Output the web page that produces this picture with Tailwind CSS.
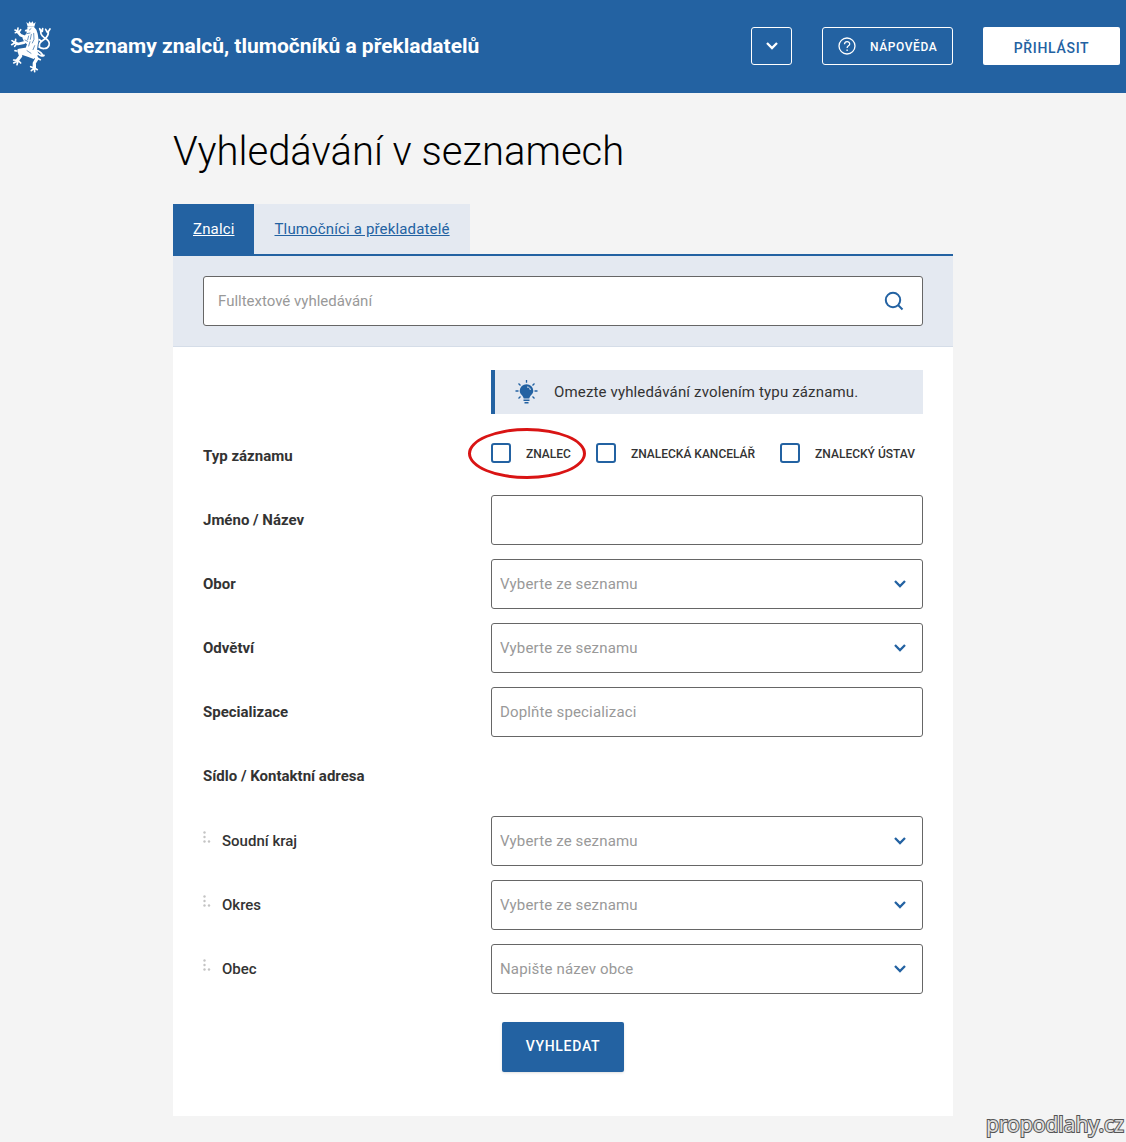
<!DOCTYPE html>
<html lang="cs">
<head>
<meta charset="utf-8">
<meta name="viewport" content="width=device-width, initial-scale=1">
<title>Seznamy znalců, tlumočníků a překladatelů</title>
<script src="https://cdn.jsdelivr.net/npm/@tailwindcss/browser@4"></script>
</head>
<body class="relative min-h-screen bg-[#f4f4f4] font-['Roboto',sans-serif] text-[15px] text-[#333]">
<svg class="hidden" aria-hidden="true">
  <symbol id="chevron" viewBox="0 0 14 10"><path d="M2 2l5 5 5-5" fill="none" stroke="currentColor" stroke-width="2.3"/></symbol>
  <symbol id="dots" viewBox="0 0 8 14"><g fill="#c4c4c4"><circle cx="1.5" cy="2.5" r="1.2"/><circle cx="1.5" cy="7" r="1.2"/><circle cx="1.5" cy="11.5" r="1.2"/><circle cx="6" cy="11.5" r="1.2"/></g></symbol>
</svg>

<header class="flex h-[93px] items-center bg-[#2362a2] pr-1.5 pl-2.5 text-white">
  <a href="#" class="flex items-center gap-[18px]">
    <svg class="h-[52px] w-[42px]" viewBox="30 35 126 156" fill="none" stroke="#fff" stroke-linecap="round" stroke-linejoin="round" aria-hidden="true">
      <!-- crown and head -->
      <path fill="#fff" stroke="none" d="M79 38l6 5 3-7 5 5 5-5 3 7 6-5-4 14H83z"/>
      <path fill="#fff" stroke="none" d="M82 53h20l7 8 4 12 3 20-3 14-2 16 4 13-14 13-18-7-18-6-13-8 12-7 13-5 4-11-8-6-6-14 9-8 5-10-7-1 2-5 6-1z"/>
      <!-- front paws -->
      <path stroke-width="8" d="M77 84L62 78 52 66M72 100L54 104 44 99"/>
      <path stroke-width="5" d="M54 67l-8 3M52 65l-7-3M53 64l1-8M57 68l5-7M45 100l-9-6M44 101l-9 5M46 98l1-8M49 105l-5 6"/>
      <!-- hind legs -->
      <path stroke-width="10" d="M76 120L57 123 62 140 52 153M102 133l9 15-8 13 0 15"/>
      <path stroke-width="5" d="M52 153l-11-1M51 156l-10 5M54 156l-3 10M56 155l6 6M102 176l-10-4M101 178l-7 6M103 178l1 9M105 177l7 4M112 147l9 4M50 125l-5-1"/>
      <!-- tail -->
      <path stroke-width="5" d="M110 124c8-1 12 5 20 15M108 127c9 12 22 16 24 11M117 113c8 6 25 8 30-5s-7-19-15-24-12-12-9-22M119 112c-4-9 3-15 11-20s17-12 15-27M123 68l-4-10M127 66l1-8M142 69l-5-9M145 67l5-8M123 95l-5-4"/>
      <!-- mane and fur lines -->
      <path stroke="#2362a2" stroke-width="2" d="M93 58l-5 4M80 73l10-2M86 80l-3 11M94 75l-3 15M101 72l1 18-5 11M75 92l8 4M90 97l-4 13M104 109l-5 12M81 124l12 8"/>
    </svg>
    <span class="text-[21px] font-bold">Seznamy znalců, tlumočníků a překladatelů</span>
  </a>
  <div class="ml-auto flex items-center gap-[30px] pb-0.5">
    <button type="button" aria-label="Další možnosti" class="flex h-[38px] w-[41px] items-center justify-center rounded-[3px] border border-white"><svg class="h-2.5 w-3.5"><use href="#chevron"/></svg></button>
    <button type="button" class="flex h-[38px] w-[131px] items-center gap-3.5 rounded-[3px] border border-white pt-0.5 pl-[15px] text-xs font-medium tracking-wider">
      <svg class="-mt-0.5 size-[18px] shrink-0" viewBox="0 0 18 18" fill="none" stroke="currentColor" stroke-width="1.3" aria-hidden="true"><circle cx="9" cy="9" r="8"/><path d="M6.500 7.300c0-3.400 5.200-3.400 5.200-.4 0 2-2.600 1.700-2.600 4.100M9.100 12.400v1.500"/></svg>
      NÁPOVĚDA
    </button>
    <button type="button" class="h-[38px] w-[137px] rounded-[2px] bg-white pt-1 text-sm font-medium tracking-wider text-[#2362a2]">PŘIHLÁSIT</button>
  </div>
</header>

<main class="mx-auto max-w-[780px] pb-[26px]">
  <h1 class="pt-[35px] text-[40px] leading-[48px] font-light text-black">Vyhledávání v seznamech</h1>
  <nav class="mt-7 flex border-b-2 border-[#2362a2]">
    <a href="#" aria-current="page" class="bg-[#2362a2] px-5 leading-[50px] tracking-[0.01em] text-white underline">Znalci</a>
    <a href="#" class="bg-[#e4e9f1] px-5 leading-[50px] tracking-[0.01em] text-[#2362a2] underline">Tlumočníci a překladatelé</a>
  </nav>

  <form class="bg-white pb-11">
    <div class="border-b border-[#d5dde8] bg-[#e4e9f1] px-[30px] py-5">
      <div class="flex h-[50px] items-center rounded-[3px] border border-[#666] bg-white pr-[18px]">
        <input type="search" aria-label="Fulltextové vyhledávání" placeholder="Fulltextové vyhledávání" class="h-full min-w-0 flex-1 px-3.5 outline-none placeholder:text-[#999]">
        <button type="submit" aria-label="Hledat" class="text-[#2362a2]"><svg class="size-5" viewBox="0 0 20 20" fill="none" stroke="currentColor" stroke-width="2"><circle cx="9" cy="9" r="7.2"/><path d="M14 14l4.500 4.500"/></svg></button>
      </div>
    </div>

    <div class="grid grid-cols-5 items-center gap-y-3.5 px-[30px] pt-[23px]">
      <p class="col-span-3 col-start-3 flex h-11 items-center gap-4 border-l-4 border-[#2362a2] bg-[#e4e9f1] pl-5 tracking-[0.01em]">
        <svg class="h-6 w-[23px] shrink-0 text-[#2362a2]" viewBox="0 0 23 24" aria-hidden="true"><path fill="currentColor" d="M11.500 4.200a6.800 6.800 0 0 0-6.800 6.500c0 3.500 3.500 4.600 4 7.800h5.600c.5-3.200 4-4.300 4-7.800a6.800 6.800 0 0 0-6.800-6.500zM8.500 19.500h6V21h-6zM9.500 22h4v1.500h-4z"/><path fill="none" stroke="#e4e9f1" d="M12 7c2.200 0 3.200 1.300 3.300 3"/><path fill="none" stroke="currentColor" stroke-width="1.3" d="M11.500 0v2.800M3.500 3.500l2 2M19.500 3.500l-2 2M.5 11h3M19.500 11h3M3.500 18.500l2-2M19.500 18.500l-2-2"/></svg>
        Omezte vyhledávání zvolením typu záznamu.
      </p>

      <span id="type" class="col-span-2 pt-1 font-bold">Typ záznamu</span>
      <div role="group" aria-labelledby="type" class="col-span-3 flex h-[53px] items-center gap-[25px] pb-1 text-xs font-medium whitespace-nowrap">
        <label class="relative flex items-center gap-[15px]">
          <input type="checkbox" class="size-5 appearance-none rounded-[3px] border-2 border-[#2362a2] bg-white checked:bg-[#2362a2]"><span class="pt-0.5">ZNALEC</span>
          <span class="pointer-events-none absolute -top-[15px] -right-[15px] -left-[23px] h-[51px] rounded-[50%] border-3 border-[#d91414]"></span>
        </label>
        <label class="flex items-center gap-[15px]"><input type="checkbox" class="size-5 appearance-none rounded-[3px] border-2 border-[#2362a2] bg-white checked:bg-[#2362a2]"><span class="pt-0.5">ZNALECKÁ KANCELÁŘ</span></label>
        <label class="flex items-center gap-[15px]"><input type="checkbox" class="size-5 appearance-none rounded-[3px] border-2 border-[#2362a2] bg-white checked:bg-[#2362a2]"><span class="pt-0.5">ZNALECKÝ ÚSTAV</span></label>
      </div>

      <label for="name" class="col-span-2 font-bold">Jméno / Název</label>
      <input id="name" type="text" class="col-span-3 h-[50px] rounded-[3px] border border-[#666] bg-white px-2 tracking-[0.01em]">

      <label for="field" class="col-span-2 font-bold">Obor</label>
      <div class="relative col-span-3">
        <select id="field" class="block h-[50px] w-full appearance-none rounded-[3px] border border-[#666] bg-white px-2 tracking-[0.01em] text-[#999]"><option>Vyberte ze seznamu</option></select>
        <svg class="pointer-events-none absolute top-5 right-4 h-2.5 w-3.5 text-[#2362a2]"><use href="#chevron"/></svg>
      </div>

      <label for="branch" class="col-span-2 font-bold">Odvětví</label>
      <div class="relative col-span-3">
        <select id="branch" class="block h-[50px] w-full appearance-none rounded-[3px] border border-[#666] bg-white px-2 tracking-[0.01em] text-[#999]"><option>Vyberte ze seznamu</option></select>
        <svg class="pointer-events-none absolute top-5 right-4 h-2.5 w-3.5 text-[#2362a2]"><use href="#chevron"/></svg>
      </div>

      <label for="spec" class="col-span-2 font-bold">Specializace</label>
      <input id="spec" type="text" placeholder="Doplňte specializaci" class="col-span-3 h-[50px] rounded-[3px] border border-[#666] bg-white px-2 tracking-[0.01em] placeholder:text-[#999]">

      <h2 class="col-span-5 leading-[51px] font-bold">Sídlo / Kontaktní adresa</h2>

      <label for="region" class="col-span-2 flex items-center gap-[11px] font-medium"><svg class="mb-2 h-3.5 w-2"><use href="#dots"/></svg>Soudní kraj</label>
      <div class="relative col-span-3">
        <select id="region" class="block h-[50px] w-full appearance-none rounded-[3px] border border-[#666] bg-white px-2 tracking-[0.01em] text-[#999]"><option>Vyberte ze seznamu</option></select>
        <svg class="pointer-events-none absolute top-5 right-4 h-2.5 w-3.5 text-[#2362a2]"><use href="#chevron"/></svg>
      </div>

      <label for="district" class="col-span-2 flex items-center gap-[11px] font-medium"><svg class="mb-2 h-3.5 w-2"><use href="#dots"/></svg>Okres</label>
      <div class="relative col-span-3">
        <select id="district" class="block h-[50px] w-full appearance-none rounded-[3px] border border-[#666] bg-white px-2 tracking-[0.01em] text-[#999]"><option>Vyberte ze seznamu</option></select>
        <svg class="pointer-events-none absolute top-5 right-4 h-2.5 w-3.5 text-[#2362a2]"><use href="#chevron"/></svg>
      </div>

      <label for="town" class="col-span-2 flex items-center gap-[11px] font-medium"><svg class="mb-2 h-3.5 w-2"><use href="#dots"/></svg>Obec</label>
      <div class="relative col-span-3">
        <input id="town" type="text" placeholder="Napište název obce" class="block h-[50px] w-full rounded-[3px] border border-[#666] bg-white px-2 tracking-[0.01em] placeholder:text-[#999]">
        <svg class="pointer-events-none absolute top-5 right-4 h-2.5 w-3.5 text-[#2362a2]"><use href="#chevron"/></svg>
      </div>

      <div class="col-span-3 col-start-3 pt-3.5 pl-[11px]">
        <button type="submit" class="block h-[50px] w-[122px] rounded-[2px] bg-[#2362a2] pb-0.5 text-sm font-medium tracking-wider text-white shadow-sm">VYHLEDAT</button>
      </div>
    </div>
  </form>
</main>

<span class="absolute right-0.5 bottom-[3px] font-['Noto_Sans',sans-serif] text-[21px] leading-[30px] text-[#ddd] [-webkit-text-stroke:2px_#555] [paint-order:stroke_fill]">propodlahy.cz</span>
</body>
</html>
